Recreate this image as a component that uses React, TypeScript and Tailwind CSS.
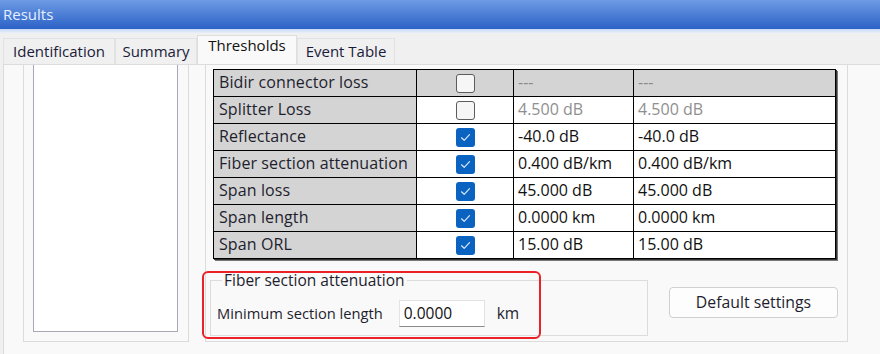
import React from "react";

type Row = {
  label: string;
  checked: boolean;
  v1: string;
  v2: string;
  disabled?: boolean;
  gray?: boolean;
};

const rows: Row[] = [
  { label: "Bidir connector loss", checked: false, v1: "---", v2: "---", disabled: true },
  { label: "Splitter Loss", checked: false, v1: "4.500 dB", v2: "4.500 dB", gray: true },
  { label: "Reflectance", checked: true, v1: "-40.0 dB", v2: "-40.0 dB" },
  { label: "Fiber section attenuation", checked: true, v1: "0.400 dB/km", v2: "0.400 dB/km" },
  { label: "Span loss", checked: true, v1: "45.000 dB", v2: "45.000 dB" },
  { label: "Span length", checked: true, v1: "0.0000 km", v2: "0.0000 km" },
  { label: "Span ORL", checked: true, v1: "15.00 dB", v2: "15.00 dB" },
];

function CheckBox({ checked }: { checked: boolean }) {
  if (checked) {
    return (
      <div className="w-[19px] h-[19px] rounded-[3px] bg-[#0b63c1] flex items-center justify-center">
        <svg width="11" height="9" viewBox="0 0 11 9" fill="none">
          <path d="M1.5 4.8 L4.2 7.3 L9.5 1.6" stroke="#dbe8f7" strokeWidth="1.2" strokeLinecap="round" strokeLinejoin="round" />
        </svg>
      </div>
    );
  }
  return <div className="w-[19px] h-[19px] rounded-[3px] border border-[#5c5c5c] bg-[#f6f6f6]" />;
}

function Tab({ label, selected, w }: { label: string; selected?: boolean; w: string }) {
  return (
    <div
      className={
        selected
          ? `${w} h-[29px] bg-[#f9f9f9] border border-b-0 border-[#dedede] flex items-start pt-[2px] justify-center text-[#111]`
          : `${w} h-[26px] bg-[#f0f0f0] border border-b-0 border-[#e2e2e2] flex items-center justify-center text-[#1b1b3a]`
      }
    >
      {label}
    </div>
  );
}

export default function App() {
  return (
    <div className="relative w-[880px] h-[354px] overflow-hidden bg-[#f0f0f0] [font-family:'Open_Sans',sans-serif] text-[15px] leading-none">
      {/* title bar */}
      <div className="h-[29px] bg-gradient-to-b from-[#6d9ae3] to-[#2c62c7] flex items-center pl-[3px] text-[15px] text-[#e6efff]">
        Results
      </div>
      <div className="h-[4px] bg-gradient-to-b from-[#c6daf4] to-[#e8eff9]" />

      {/* tabs */}
      <div className="h-[31px] flex items-end pl-[3px]">
        <Tab label="Identification" w="w-[112px]" />
        <Tab label="Summary" w="w-[82px]" />
        <Tab label="Thresholds" w="w-[100px]" selected />
        <Tab label="Event Table" w="w-[98px]" />
      </div>

      {/* panel */}
      <div className="ml-[3px] h-[290px] border-l border-t border-[#dcdcdc] bg-[#f9f9f9] flex pl-[19px]">
        {/* left frame */}
        <div className="w-[166px] h-[277px] border-l border-r border-b border-[#dcdcdc] pl-[9px]">
          <div className="w-[145px] h-[267px] bg-white border-l border-r border-b border-[#a9a9b5]" />
        </div>

        {/* right frame */}
        <div className="ml-[16px] w-[643px] h-[277px] border-l border-r border-b border-[#dcdcdc] pt-[4px] pl-[4px] flex flex-col">
          <div className="ml-[3px] w-[623px] grid grid-cols-[203px_97px_120px_202px] border-t border-l border-black shadow-[1px_1px_0_#333,2px_2px_0_#777] text-[16px]">
            {rows.map((r) => (
              <React.Fragment key={r.label}>
                <div className="h-[27px] border-r border-b border-black bg-[#d4d4d4] flex items-center pl-[5px] pb-[2px] text-[#1e1e2e] tracking-[0.1px]">
                  {r.label}
                </div>
                <div className={`h-[27px] border-r border-b border-black flex items-center justify-center ${r.disabled ? "bg-[#d4d4d4]" : "bg-white"}`}>
                  <CheckBox checked={r.checked} />
                </div>
                <div
                  className={`h-[27px] border-r border-b border-black flex items-center pl-[4px] pb-[2px] ${
                    r.disabled ? "bg-[#d4d4d4] text-[#8a8a8a]" : r.gray ? "bg-white text-[#8f8f8f]" : "bg-white text-[#111]"
                  }`}
                >
                  {r.v1}
                </div>
                <div
                  className={`h-[27px] border-r border-b border-black flex items-center pl-[4px] pb-[2px] ${
                    r.disabled ? "bg-[#d4d4d4] text-[#8a8a8a]" : r.gray ? "bg-white text-[#8f8f8f]" : "bg-white text-[#111]"
                  }`}
                >
                  {r.v2}
                </div>
              </React.Fragment>
            ))}
          </div>

          {/* bottom area */}
          <div className="flex mt-[13px]">
            <fieldset className="w-[438px] h-[64px] border border-[#dcdcdc] pl-[6px]">
              <legend className="ml-[5px] px-[2px] text-[15.5px] text-[#1e1e2e] leading-[16px]">Fiber section attenuation</legend>
              <div className="flex items-center mt-[12px] text-[14.7px]">
                <span className="text-[#1e1e2e]">Minimum section length</span>
                <div className="ml-[16px] w-[86px] h-[27px] bg-white border border-[#e3e3e3] border-b-[#8a8a8a] flex items-center pl-[4px] text-[15.5px] text-[#111]">
                  0.0000
                </div>
                <span className="ml-[12px] text-[15.5px] text-[#1e1e2e]">km</span>
              </div>
            </fieldset>
            <div className="ml-[21px] mt-[15px] w-[169px] h-[31px] bg-[#fdfdfd] border border-[#d0d0d0] rounded-[4px] flex items-center justify-center text-[15.8px] text-[#1e1e2e]">
              Default settings
            </div>
          </div>
        </div>
      </div>

      {/* annotation */}
      <div className="absolute left-[202px] top-[271px] w-[339px] h-[68px] border-2 border-[#ec2128] rounded-[6px]" />
    </div>
  );
}
